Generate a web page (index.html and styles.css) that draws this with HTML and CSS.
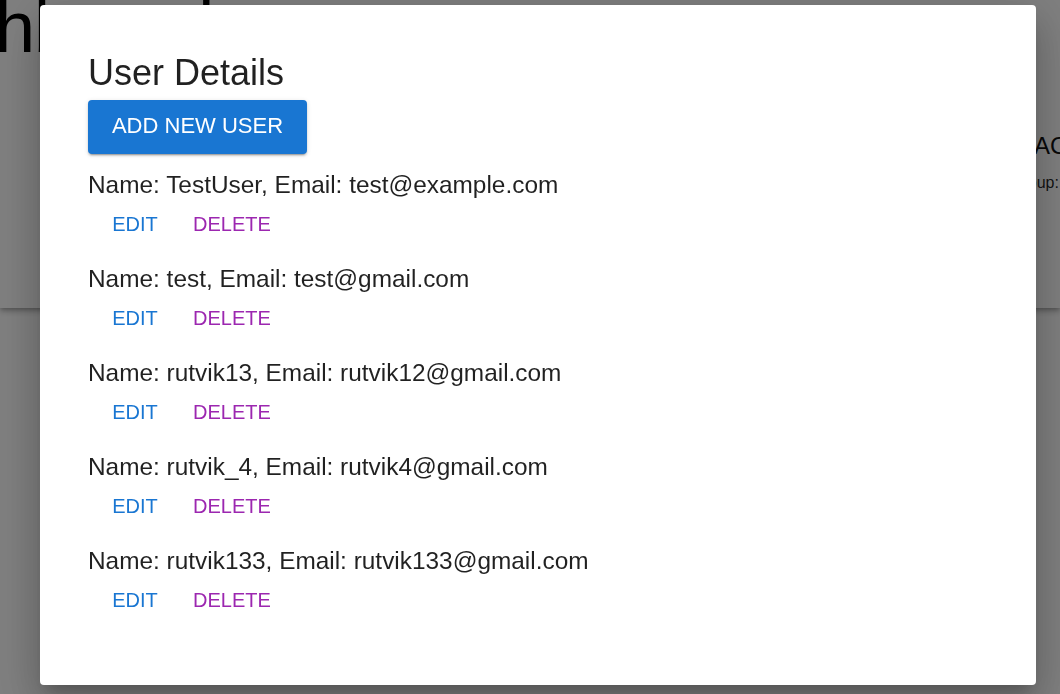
FILE: index.html
```html
<!DOCTYPE html>
<html lang="en">
<head>
<meta charset="utf-8">
<title>User Details</title>
<link rel="stylesheet" href="styles.css">
</head>
<body>
<div class="page">
  <header class="hero">
    <h1 class="hero-title">Dashboard</h1>
    <div class="hero-side">
      <h2 class="side-title">ACTIVE USERS</h2>
      <p class="side-text">Group: Admin</p>
    </div>
  </header>
  <main class="content"></main>
</div>

<div class="backdrop">
  <div class="dialog" role="dialog">
    <h2 class="dialog-title">User Details</h2>
    <button class="btn-primary" type="button">ADD NEW USER</button>
    <ul class="user-list">
      <li class="user">
        <p class="user-line">Name: TestUser, Email: test@example.com</p>
        <div class="actions">
          <button class="btn-text btn-edit" type="button">EDIT</button>
          <button class="btn-text btn-delete" type="button">DELETE</button>
        </div>
      </li>
      <li class="user">
        <p class="user-line">Name: test, Email: test@gmail.com</p>
        <div class="actions">
          <button class="btn-text btn-edit" type="button">EDIT</button>
          <button class="btn-text btn-delete" type="button">DELETE</button>
        </div>
      </li>
      <li class="user">
        <p class="user-line">Name: rutvik13, Email: rutvik12@gmail.com</p>
        <div class="actions">
          <button class="btn-text btn-edit" type="button">EDIT</button>
          <button class="btn-text btn-delete" type="button">DELETE</button>
        </div>
      </li>
      <li class="user">
        <p class="user-line">Name: rutvik_4, Email: rutvik4@gmail.com</p>
        <div class="actions">
          <button class="btn-text btn-edit" type="button">EDIT</button>
          <button class="btn-text btn-delete" type="button">DELETE</button>
        </div>
      </li>
      <li class="user">
        <p class="user-line">Name: rutvik133, Email: rutvik133@gmail.com</p>
        <div class="actions">
          <button class="btn-text btn-edit" type="button">EDIT</button>
          <button class="btn-text btn-delete" type="button">DELETE</button>
        </div>
      </li>
    </ul>
  </div>
</div>
</body>
</html>
```

FILE: styles.css
```css
* {
  box-sizing: border-box;
}

html, body {
  margin: 0;
  padding: 0;
  width: 1060px;
  height: 694px;
  overflow: hidden;
  background: #ffffff;
  font-family: "Liberation Sans", Arial, sans-serif;
  color: rgba(0, 0, 0, 0.87);
}

/* ---------- background page ---------- */
.page {
  display: flex;
  flex-direction: column;
  height: 694px;
}

.hero {
  display: grid;
  grid-template-columns: 1010px 200px;
  height: 308px;
  background: #ffffff;
  box-shadow: 0 2px 4px -1px rgba(0, 0, 0, 0.2), 0 4px 5px 0 rgba(0, 0, 0, 0.14), 0 1px 10px 0 rgba(0, 0, 0, 0.12);
  position: relative;
  z-index: 1;
}

.hero-title {
  margin: -9px 0 0 -130px;
  font-size: 72px;
  line-height: 72px;
  font-weight: 400;
  color: #000;
  white-space: nowrap;
  letter-spacing: -1px;
}

.hero-side {
  padding-top: 131px;
  white-space: nowrap;
}

.side-title {
  margin: 0 0 0 24px;
  font-size: 24px;
  line-height: 30px;
  font-weight: 400;
  color: #111;
}

.side-text {
  margin: 10px 0 0;
  font-size: 16px;
  line-height: 24px;
}

.content {
  flex: 1;
  background: #ffffff;
}

/* ---------- modal ---------- */
.backdrop {
  position: fixed;
  inset: 0;
  background: rgba(0, 0, 0, 0.5);
  display: flex;
  align-items: flex-start;
  padding: 5px 24px 0 40px;
  z-index: 10;
}

.dialog {
  width: 996px;
  height: 680px;
  background: #ffffff;
  border-radius: 4px;
  padding: 46px 48px 45px;
  box-shadow: 0 11px 15px -7px rgba(0, 0, 0, 0.2), 0 24px 38px 3px rgba(0, 0, 0, 0.14), 0 9px 46px 8px rgba(0, 0, 0, 0.12);
  display: flex;
  flex-direction: column;
  align-items: flex-start;
}

.dialog-title {
  margin: 0 0 4.5px;
  font-size: 36px;
  line-height: 1.235;
  font-weight: 400;
  color: rgba(0, 0, 0, 0.87);
}

.btn-primary {
  font-family: inherit;
  font-size: 22px;
  line-height: 35px;
  font-weight: 500;
  color: #ffffff;
  background: #1976d2;
  border: 0;
  border-radius: 4px;
  padding: 8px 0 11px;
  width: 219px;
  height: 54px;
  text-align: center;
  white-space: nowrap;
  box-shadow: 0 3px 1px -2px rgba(0, 0, 0, 0.2), 0 2px 2px 0 rgba(0, 0, 0, 0.14), 0 1px 5px 0 rgba(0, 0, 0, 0.12);
  cursor: pointer;
}

.user-list {
  list-style: none;
  margin: 16px 0 0;
  padding: 0;
  display: flex;
  flex-direction: column;
}

.user {
  margin-bottom: 16px;
}

.user-line {
  margin: 0;
  font-size: 24.4px;
  line-height: 30px;
  color: rgba(0, 0, 0, 0.87);
  white-space: nowrap;
}

.actions {
  margin-top: 1px;
  padding-left: 15px;
  display: flex;
  gap: 18px;
}

.btn-text {
  font-family: inherit;
  font-size: 20px;
  line-height: 35px;
  font-weight: 400;
  min-width: 64px;
  padding: 6px 8px;
  border: 0;
  border-radius: 4px;
  background: transparent;
  text-align: center;
  cursor: pointer;
}

.btn-edit {
  color: #1976d2;
}

.btn-delete {
  color: #9c27b0;
}
```
